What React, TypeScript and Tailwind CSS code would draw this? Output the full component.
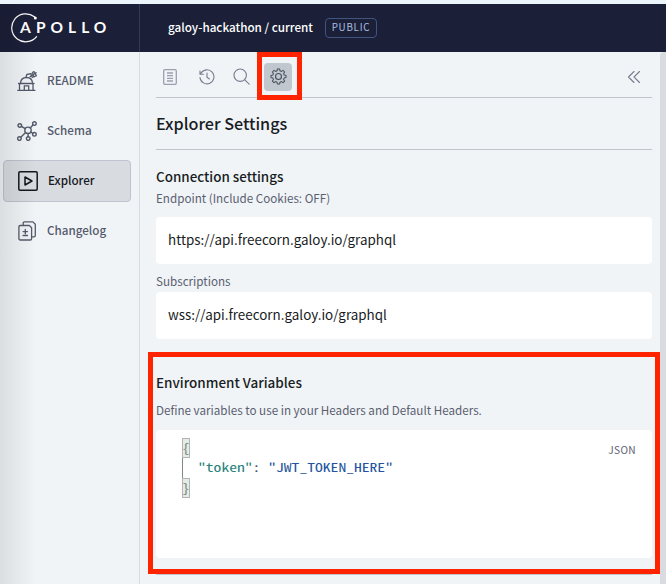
import type { ReactNode } from "react";

const stroke = {
  fill: "none",
  stroke: "currentColor",
  strokeWidth: 1.3,
  strokeLinecap: "round",
  strokeLinejoin: "round",
} as const;

function ApolloLogo() {
  return (
    <div className="relative h-[30px] w-[100px] text-white">
      <svg className="absolute top-0 left-0 h-[30px] w-[30px]" viewBox="0 0 30 30" aria-hidden="true">
        <path d="M23.4 3.8A14 14 0 1 0 25.600 23.600" fill="none" stroke="currentColor" strokeWidth="1.2" strokeLinecap="round" />
        <circle cx="24.3" cy="5" r="1.5" fill="currentColor" />
      </svg>
      <span className="absolute top-[4px] left-[9px] font-['Lato',sans-serif] text-[15.5px] leading-5 font-bold">A</span>
      <span className="absolute top-[4px] left-[25px] font-['Lato',sans-serif] text-[15.5px] leading-5 font-bold tracking-[5px]">POLLO</span>
    </div>
  );
}

function ReadmeIcon() {
  return (
    <svg viewBox="0 0 20 20" className="size-5" {...stroke}>
      <path d="M.8 19.300h17.200M2.500 19v-6.500M16 19v-6.500M1.500 12.500h15.500M3.500 12.200C3.800 8.600 6.300 6.500 9.500 6.500s5.800 2.100 6 5.700M7.300 19v-4.200h4.400V19" />
      <path d="M9 6.300l.8-2.800 4.400-.8M13.800 2.800l1.600 3.600M13.200 5.600l6-3.800M15.500 1.300l1.700-.6 2.200 4-2.600 1.300z" />
    </svg>
  );
}

function SchemaIcon() {
  return (
    <svg viewBox="0 0 20 20" className="size-5" {...stroke} strokeWidth={1.4}>
      <circle cx="11" cy="9.300" r="3.2" />
      <circle cx="2.800" cy="4.500" r="1.800" />
      <circle cx="17.400" cy="2.600" r="1.800" />
      <circle cx="17.400" cy="13.300" r="1.800" />
      <circle cx="11.200" cy="17.600" r="1.800" />
      <circle cx="2.400" cy="17.600" r="1.800" />
      <path d="M4.500 5.300l3.700 2.300M13.300 7l2.600-3M13.800 11l2 1.300M11.100 12.600v3.200M8.600 11.600l-4.800 4.600" />
    </svg>
  );
}

function ExplorerIcon() {
  return (
    <svg viewBox="0 0 20 20" className="size-5" {...stroke} strokeWidth={1.5}>
      <rect x="0.8" y="0.8" width="18.4" height="18.4" rx="1.2" />
      <path d="M7 6v8l7-4z" />
    </svg>
  );
}

function ChangelogIcon() {
  return (
    <svg viewBox="-1 0 20 20" className="size-5" {...stroke}>
      <path d="M5.2 4V2.200c0-.8.5-1.300 1.300-1.300h8.400l2.400 2.400v11.200c0 .8-.5 1.300-1.300 1.300h-2" />
      <path d="M2.200 4.500h9.200l2.200 2.200v11c0 .8-.5 1.300-1.300 1.300H2.200c-.8 0-1.300-.5-1.300-1.300v-12c0-.7.5-1.200 1.300-1.200z" />
      <path d="M7.300 8.400v4.400M5.100 10.600h4.400M5.100 14.500h4.400" />
    </svg>
  );
}

function DocumentIcon() {
  return (
    <svg viewBox="0 0 16 16" className="size-4" {...stroke} stroke="#9b9fb0">
      <rect x="1.7" y="0.7" width="12.6" height="14.6" rx="1.2" />
      <path d="M5 4h6M5 6.7h6M5 9.3h6M5 12h6" strokeLinecap="butt" />
    </svg>
  );
}

function HistoryIcon() {
  return (
    <svg viewBox="0 0 16 16" className="size-4" {...stroke} strokeWidth={1.1}>
      <path d="M1.9 4.3A7 7 0 1 1 1 8.6M1 2v3.2h3.4M8 4v4.3l2.4 1.7" />
    </svg>
  );
}

function SearchIcon() {
  return (
    <svg viewBox="0 0 17 17" className="size-[17px]" {...stroke} strokeWidth={1.1}>
      <circle cx="7.2" cy="7.2" r="6.2" />
      <path d="M11.8 11.8l4.4 4.4" />
    </svg>
  );
}

function GearIcon() {
  return (
    <svg viewBox="0 0 24 24" className="size-[17px] text-[#4a505b]" {...stroke} strokeWidth={1.6}>
      <path d="M10.300 1.300h3.400l.6 2.900 2.200.9 2.500-1.600 2.500 2.500-1.600 2.500.9 2.200 2.900.6v3.400l-2.900.6-.9 2.200 1.600 2.500-2.500 2.500-2.500-1.600-2.200.9-.6 2.900h-3.400l-.6-2.900-2.200-.9L5 22.500 2.500 20l1.600-2.500-.9-2.200-2.900-.6v-3.400l2.900-.6.9-2.200L2.500 6 5 3.500l2.500 1.600 2.200-.9z" transform="translate(1.100 .180) scale(.91)" />
      <circle cx="12" cy="12" r="4.200" />
    </svg>
  );
}

function NavItem({ icon, label, active = false }: { icon: ReactNode; label: string; active?: boolean }) {
  return (
    <a
      className={
        active
          ? "flex h-[42px] items-center gap-[10px] rounded-[4px] border border-[#bdc3cf] bg-[#d8dce0] pl-[14px] text-[#15181e]"
          : "flex h-[42px] items-center gap-[10px] pl-[14px] text-[#545a6b]"
      }
    >
      {icon}
      <span className="pb-[2px] text-[11.65px] leading-5 font-medium">{label}</span>
    </a>
  );
}

function Field({ value }: { value: string }) {
  return <div className="flex h-[47px] items-center rounded-[4px] bg-white pb-[3px] pl-3 text-[13.42px] leading-5 text-[#191c23]">{value}</div>;
}

function Bracket({ children }: { children: string }) {
  return (
    <span className="flex h-5 w-2 items-center justify-center border border-[#b3b5b5] bg-[#e3ede3] text-[#7b7f83]">
      <span className="origin-center scale-y-[0.8] pb-[2px]">{children}</span>
    </span>
  );
}

export default function App() {
  return (
    <div className="relative flex h-[584px] w-[666px] flex-col overflow-hidden border-t-4 border-[#edf5fc] bg-[#f0f4f7] font-['Noto_Sans_CJK_SC',sans-serif]">
      <header className="flex h-12 shrink-0 bg-[#1b1f38]">
        <div className="flex w-[140px] items-center border-r border-[#2d3c5d] pl-[11px]">
          <ApolloLogo />
        </div>
        <div className="flex items-center gap-3 pl-7">
          <h1 className="pb-[2px] text-[11.69px] leading-5 font-medium text-white">galoy-hackathon / current</h1>
          <span className="flex h-5 w-[52px] items-center justify-center rounded-[4px] border border-[#3f557f] pb-px text-[9.8px] tracking-[0.75px] text-[#a9bfe0]">PUBLIC</span>
        </div>
      </header>

      <div className="flex min-h-0 flex-1">
        <nav className="flex w-[140px] shrink-0 flex-col gap-2 border-r border-[#d8dce0] pt-2 pr-2 pl-[3px]">
          <NavItem icon={<ReadmeIcon />} label="README" />
          <NavItem icon={<SchemaIcon />} label="Schema" />
          <NavItem icon={<ExplorerIcon />} label="Explorer" active />
          <NavItem icon={<ChangelogIcon />} label="Changelog" />
        </nav>

        <main className="flex w-[520px] shrink-0 flex-col pr-2 pl-4 text-[#191c23]">
          <div className="flex h-[46px] w-[496px] shrink-0 items-center border-b border-[#c1c6cd] pt-1 pl-[6px] text-[#777c8f]">
            <DocumentIcon />
            <span className="ml-[21px]"><HistoryIcon /></span>
            <span className="ml-[18px]"><SearchIcon /></span>
            <span className="relative ml-[14px] flex size-7 items-center justify-center rounded-[4px] bg-[#c1c7ce]">
              <GearIcon />
              <span className="absolute -top-[11px] -left-[7px] h-12 w-[45px] border-[5px] border-[#ff2300]" />
            </span>
            <svg viewBox="0 0 14 14" className="mr-[11px] ml-auto size-[14px]" {...stroke} strokeWidth={1.1}>
              <path d="M7 1.500L1.500 7 7 12.500M12.500 1.500L7 7l5.500 5.500" />
            </svg>
          </div>
          <h2 className="flex h-[52px] w-[496px] shrink-0 items-center border-b border-[#c1c6cd] pb-[2px] text-[16.15px] leading-6 font-medium">Explorer Settings</h2>

          <section className="w-[496px] pt-4">
            <h3 className="text-[13.42px] leading-5 font-medium">Connection settings</h3>
            <p className="mt-[2px] mb-[9px] text-[11.65px] leading-5 text-[#5b6070]">Endpoint (Include Cookies: OFF)</p>
            <Field value="https://api.freecorn.galoy.io/graphql" />
            <p className="mt-[7px] mb-px text-[11.65px] leading-5 text-[#5b6070]">Subscriptions</p>
            <Field value="wss://api.freecorn.galoy.io/graphql" />
          </section>

          <section className="mt-[13px] -ml-[8px] h-[222px] w-[512px] shrink-0 border-[5px] border-[#ff2300] px-[3px]">
            <h3 className="mt-[15px] text-[13.48px] leading-5 font-medium">Environment Variables</h3>
            <p className="mt-2 text-[11.65px] leading-5 text-[#5b6070]">Define variables to use in your Headers and Default Headers.</p>
            <div className="mt-[10px] flex h-[128px] w-[496px] justify-between rounded-[4px] bg-white pt-[8px] pr-4 pl-[26px]">
              <div className="font-['Noto_Sans_Mono_CJK_SC','DejaVu_Sans_Mono',monospace] text-[15.6px] leading-5">
                <Bracket>{"{"}</Bracket>
                <div className="h-5 border-l border-[#85888b] pl-[15px]">
                  <p className="origin-center -translate-y-px scale-y-[0.78] whitespace-pre">
                    <span className="text-[#2a827b]">"token"</span>
                    <span className="text-[#50556a]">: </span>
                    <span className="text-[#2454a0]">"JWT_TOKEN_HERE"</span>
                  </p>
                </div>
                <Bracket>{"}"}</Bracket>
              </div>
              <span className="mt-[2px] text-[10.1px] leading-5 tracking-[0.4px] text-[#5b6070]">JSON</span>
            </div>
          </section>
          <div className="w-[496px] border-t border-[#c1c6cd]" />
        </main>
        <div className="w-[6px] shrink-0 rounded-tl-[4px] bg-[#d8dce0]" />
      </div>

      <div className="pointer-events-none absolute inset-y-0 left-0 w-9 bg-gradient-to-r from-black/9 to-transparent" />
    </div>
  );
}
